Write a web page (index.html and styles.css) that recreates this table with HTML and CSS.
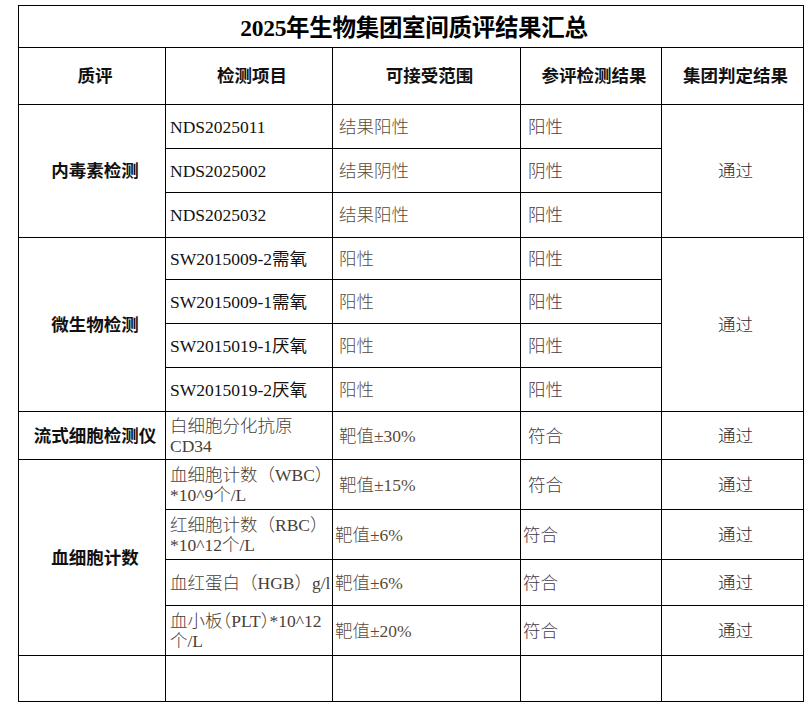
FILE: index.html
```html
<!DOCTYPE html>
<html lang="zh-CN">
<head>
<meta charset="utf-8">
<title>2025年生物集团室间质评结果汇总</title>
<link rel="stylesheet" href="styles.css">
</head>
<body>
<table class="sheet">
  <colgroup>
    <col class="c1"><col class="c2"><col class="c3"><col class="c4"><col class="c5">
  </colgroup>
  <tr class="r-title"><td colspan="5" class="title">2025年生物集团室间质评结果汇总</td></tr>
  <tr class="r-head">
    <th>质评</th><th>检测项目</th><th>可接受范围</th><th>参评检测结果</th><th>集团判定结果</th>
  </tr>
  <tr class="r44">
    <td rowspan="3" class="group">内毒素检测</td>
    <td class="item">NDS2025011</td>
    <td class="range">结果阳性</td>
    <td class="res">阳性</td>
    <td rowspan="3" class="pass">通过</td>
  </tr>
  <tr class="r44">
    <td class="item">NDS2025002</td>
    <td class="range">结果阴性</td>
    <td class="res">阴性</td>
  </tr>
  <tr class="r45">
    <td class="item">NDS2025032</td>
    <td class="range">结果阳性</td>
    <td class="res">阳性</td>
  </tr>
  <tr class="r42">
    <td rowspan="4" class="group">微生物检测</td>
    <td class="item">SW2015009-2需氧</td>
    <td class="range">阳性</td>
    <td class="res">阳性</td>
    <td rowspan="4" class="pass">通过</td>
  </tr>
  <tr class="r44">
    <td class="item">SW2015009-1需氧</td>
    <td class="range">阳性</td>
    <td class="res">阳性</td>
  </tr>
  <tr class="r44">
    <td class="item">SW2015019-1厌氧</td>
    <td class="range">阳性</td>
    <td class="res">阳性</td>
  </tr>
  <tr class="r44">
    <td class="item">SW2015019-2厌氧</td>
    <td class="range">阳性</td>
    <td class="res">阳性</td>
  </tr>
  <tr class="r48">
    <td class="group">流式细胞检测仪</td>
    <td class="item wrap">白细胞分化抗原<br>CD34</td>
    <td class="range">靶值±30%</td>
    <td class="res">符合</td>
    <td class="pass">通过</td>
  </tr>
  <tr class="r50">
    <td rowspan="4" class="group">血细胞计数</td>
    <td class="item wrap">血细胞计数（WBC）<br>*10^9个/L</td>
    <td class="range">靶值±15%</td>
    <td class="res">符合</td>
    <td class="pass">通过</td>
  </tr>
  <tr class="r50">
    <td class="item wrap">红细胞计数（RBC）<br>*10^12个/L</td>
    <td class="range tight">靶值±6%</td>
    <td class="res tight">符合</td>
    <td class="pass">通过</td>
  </tr>
  <tr class="r46">
    <td class="item wrap">血红蛋白（HGB）g/l</td>
    <td class="range tight">靶值±6%</td>
    <td class="res tight">符合</td>
    <td class="pass">通过</td>
  </tr>
  <tr class="r50">
    <td class="item wrap compact">血小板（PLT）*10^12<br>个/L</td>
    <td class="range tight">靶值±20%</td>
    <td class="res tight">符合</td>
    <td class="pass">通过</td>
  </tr>
  <tr class="r46">
    <td></td><td></td><td></td><td></td><td></td>
  </tr>
</table>
</body>
</html>
```

FILE: styles.css
```css
html, body {
  background: #ffffff;
}
body {
  margin: 5px 0 0 18px;
  font-family: "Liberation Serif", "Noto Sans CJK SC", serif;
  color: #000;
}
.sheet {
  border-collapse: collapse;
  table-layout: fixed;
  width: 785px;
}
.c1 { width: 147px; }
.c2 { width: 167px; }
.c3 { width: 188px; }
.c4 { width: 141px; }
.c5 { width: 142px; }

.sheet td, .sheet th {
  border: 1px solid #000;
  padding: 0;
  vertical-align: middle;
  font-size: 17.5px;
  line-height: 20px;
  overflow: hidden;
}
.r-title { height: 42px; }
.r-head { height: 57px; }
.r42 { height: 42px; }
.r44 { height: 44px; }
.r45 { height: 45px; }
.r46 { height: 46px; }
.r48 { height: 48px; }
.r50 { height: 50px; }

.title {
  text-align: center;
  font-weight: 700;
  font-size: 23.5px !important;
  letter-spacing: -0.3px;
  padding-left: 6px !important;
  padding-top: 2px !important;
}
.sheet th {
  font-weight: 700;
  text-align: center;
  padding-left: 6px;
  color: #111;
}
.group {
  font-weight: 700;
  text-align: center;
  padding-left: 6px !important;
  color: #111;
}
.item {
  padding-left: 4px !important;
  color: #111;
  white-space: nowrap;
}
.item.wrap {
  color: #4a4038;
  font-weight: 300;
}
.compact {
  font-feature-settings: "halt";
}
.range {
  padding-left: 6px !important;
  color: #5a4a3a;
  font-weight: 300;
  white-space: nowrap;
}
.res {
  padding-left: 7px !important;
  color: #4a3a4a;
  font-weight: 300;
  white-space: nowrap;
}
.tight {
  padding-left: 2px !important;
}
.pass {
  text-align: center;
  padding-left: 6px !important;
  color: #2a2a2a;
  font-weight: 300;
}
```
